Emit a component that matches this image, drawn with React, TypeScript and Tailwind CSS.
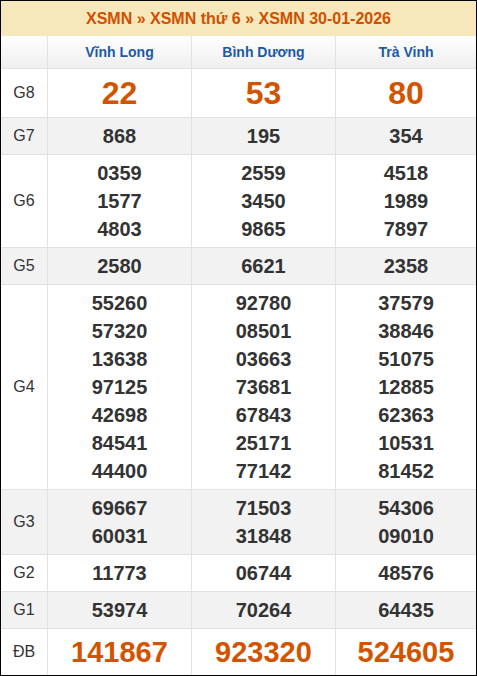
import React from "react";

type Row = { label: string; vals: string[][]; kind: "big" | "normal" | "db"; gray: boolean };

const rows: Row[] = [
  { label: "G8", vals: [["22"], ["53"], ["80"]], kind: "big", gray: false },
  { label: "G7", vals: [["868"], ["195"], ["354"]], kind: "normal", gray: true },
  { label: "G6", vals: [["0359", "1577", "4803"], ["2559", "3450", "9865"], ["4518", "1989", "7897"]], kind: "normal", gray: false },
  { label: "G5", vals: [["2580"], ["6621"], ["2358"]], kind: "normal", gray: true },
  {
    label: "G4",
    vals: [
      ["55260", "57320", "13638", "97125", "42698", "84541", "44400"],
      ["92780", "08501", "03663", "73681", "67843", "25171", "77142"],
      ["37579", "38846", "51075", "12885", "62363", "10531", "81452"],
    ],
    kind: "normal",
    gray: false,
  },
  { label: "G3", vals: [["69667", "60031"], ["71503", "31848"], ["54306", "09010"]], kind: "normal", gray: true },
  { label: "G2", vals: [["11773"], ["06744"], ["48576"]], kind: "normal", gray: false },
  { label: "G1", vals: [["53974"], ["70264"], ["64435"]], kind: "normal", gray: true },
  { label: "ĐB", vals: [["141867"], ["923320"], ["524605"]], kind: "db", gray: false },
];

export default function App() {
  return (
    <div className="w-[477px] h-[676px] border border-black bg-white font-['Liberation_Sans',Arial,sans-serif] text-[#333]">
      <div className="h-[35px] bg-[#f7e8bb] flex items-center justify-center text-[16px] font-bold text-[#d04f00]">
        XSMN » XSMN thứ 6 » XSMN 30-01-2026
      </div>
      <div className="grid grid-cols-[46px_144px_144px_1fr] h-[32px] bg-gradient-to-b from-[#ffffff] to-[#efefef]">
        <div />
        {["Vĩnh Long", "Bình Dương", "Trà Vinh"].map((n) => (
          <div key={n} className="border-l border-[#e2e2e2] flex items-center justify-center text-[14px] font-bold text-[#1b5aa6]">
            {n}
          </div>
        ))}
      </div>
      {rows.map((r) => (
        <div
          key={r.label}
          className={`grid grid-cols-[46px_144px_144px_1fr] border-t border-[#e2e2e2] ${r.gray ? "bg-[#f2f2f2]" : "bg-white"}`}
        >
          <div className="flex items-center justify-center text-[16px] text-[#333]">{r.label}</div>
          {r.vals.map((v, i) => (
            <div
              key={i}
              className={`border-l border-[#e2e2e2] flex flex-col items-center justify-center font-bold ${
                r.kind === "big"
                  ? "h-[48px] text-[32px] leading-[40px] text-[#d35400]"
                  : r.kind === "db"
                  ? "h-[46px] text-[29px] leading-[40px] text-[#d35400]"
                  : "py-[4px] text-[20px] leading-[28px] text-[#333]"
              }`}
            >
              {v.map((x) => (
                <div key={x}>{x}</div>
              ))}
            </div>
          ))}
        </div>
      ))}
    </div>
  );
}
